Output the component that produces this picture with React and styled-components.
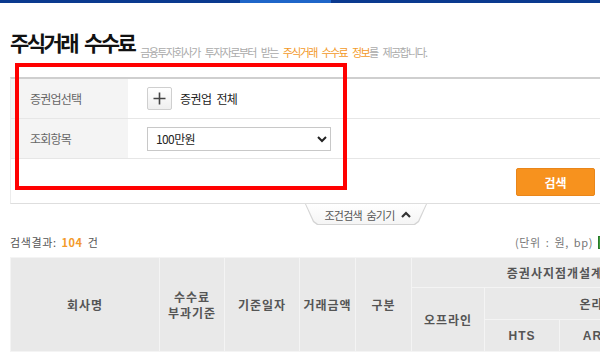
import React from 'react'
import styled, { createGlobalStyle } from 'styled-components'

const GlobalStyle = createGlobalStyle`
  body {
    margin: 0;
    overflow: hidden;
    background: #fff;
    font-family: "Noto Sans CJK KR", "Noto Sans", sans-serif;
    color: #333;
  }
`

const TopBar = styled.div`
  height: 3px;
  width: 100%;
  background: linear-gradient(to right, #0b3a8f 0, #0b3a8f 240px, #1f66c9 240px, #1f66c9 331px, #0b3a8f 331px);
`

const Page = styled.div`
  position: relative;
  width: 1100px;
  padding: 24px 0 0 10px;
`

const TitleRow = styled.div`
  display: flex;
  align-items: flex-end;
  height: 30px;
`

const Title = styled.h2`
  margin: 0;
  font-size: 21px;
  font-weight: 700;
  letter-spacing: -2.6px;
  word-spacing: 5px;
  color: #111;
  line-height: 30px;
`

const Subtitle = styled.p`
  margin: 0 0 -3px 6px;
  font-size: 11px;
  line-height: 16px;
  letter-spacing: -1.6px;
  word-spacing: 4px;
  color: #aaa;
  em {
    font-style: normal;
    color: #f39a2a;
  }
`

const FilterBox = styled.div`
  margin-top: 20px;
  border-top: 2px solid #cfcfcf;
  border-left: 1px solid #ececec;
  border-bottom: 1px solid #dedede;
`

const FilterRow = styled.div`
  display: flex;
  height: 39px;
  border-bottom: 1px solid #e6e6e6;
`

const Label = styled.div`
  width: 117px;
  background: #f4f4f4;
  display: flex;
  align-items: center;
  padding-left: 19px;
  box-sizing: border-box;
  font-size: 12px;
  letter-spacing: -0.8px;
  color: #666;
`

const Field = styled.div`
  display: flex;
  align-items: center;
  padding-left: 19px;
  gap: 8px;
  font-size: 12px;
  letter-spacing: -0.6px;
  word-spacing: 3px;
  color: #222;
`

const PlusButton = styled.button`
  width: 25px;
  height: 23px;
  padding: 0;
  border: 1px solid #cfcfcf;
  border-radius: 2px;
  background: linear-gradient(#ffffff, #efefef);
  display: flex;
  align-items: center;
  justify-content: center;
`

const Select = styled.select`
  width: 184px;
  height: 24px;
  border: 1px solid #c8c8c8;
  background: #fff;
  font-family: inherit;
  font-size: 12px;
  letter-spacing: -0.6px;
  color: #222;
  padding: 0 4px;
`

const ButtonRow = styled.div`
  display: flex;
  gap: 5px;
  padding: 9px 0 7px 505px;
`

const ActionButton = styled.button`
  width: 79px;
  height: 28px;
  border-radius: 2px;
  font-family: inherit;
  font-size: 12px;
  font-weight: 700;
  border: 1px solid ${p => (p.$primary ? '#e9861a' : '#cfcfcf')};
  background: ${p => (p.$primary ? '#f7921e' : '#fff')};
  color: ${p => (p.$primary ? '#fff' : '#555')};
`

const TabWrap = styled.div`
  display: flex;
  padding-left: 295px;
`

const Tab = styled.div`
  position: relative;
  z-index: 0;
  width: 122px;
  height: 21px;
  display: flex;
  align-items: center;
  justify-content: center;
  gap: 7px;
  padding-left: 4px;
  box-sizing: border-box;
  font-size: 11px;
  letter-spacing: -0.8px;
  word-spacing: 3px;
  color: #555;
  &::before,
  &::after {
    content: '';
    position: absolute;
    inset: 0;
    clip-path: polygon(0 0, 100% 0, calc(100% - 8px) calc(100% - 3px), calc(100% - 12px) 100%, 12px 100%, 8px calc(100% - 3px));
    z-index: -1;
  }
  &::before {
    background: #d4d4d4;
  }
  &::after {
    inset: 0 1px 1px 1px;
    background: linear-gradient(#ffffff, #f5f5f5);
  }
`

const ResultRow = styled.div`
  display: flex;
  justify-content: space-between;
  align-items: center;
  height: 18px;
  margin-top: 8px;
  width: 590px;
  font-size: 11px;
  color: #555;
  strong {
    color: #f39a2a;
    font-weight: 700;
    letter-spacing: 0.5px;
  }
`

const Count = styled.span`
  letter-spacing: 0.6px;
  word-spacing: 2px;
`

const Unit = styled.span`
  display: flex;
  align-items: center;
  gap: 5px;
  color: #777;
  letter-spacing: 0.6px;
  word-spacing: 2px;
  margin-right: -10px;
`

const ExcelIcon = styled.span`
  width: 12px;
  height: 13px;
  background: #3c9a3c;
  border: 1px solid #2a7a2a;
  box-sizing: border-box;
`

const Table = styled.table`
  margin-top: 6px;
  border-collapse: collapse;
  table-layout: fixed;
  width: 1000px;
`

const Th = styled.th`
  background: #e9e9e9;
  border: 1px solid #f4f4f4;
  font-size: 12px;
  font-weight: 700;
  color: #555;
  letter-spacing: 1px;
  line-height: 16px;
  height: ${p => p.$h || 29}px;
  padding: 0;
  font-family: ${p => (p.$latin ? '"Liberation Sans", Arial, sans-serif' : 'inherit')};
`

const Td = styled.td`
  height: 30px;
  border: 1px solid #ececec;
`

const RedFrame = styled.div`
  position: absolute;
  left: 15px;
  top: 60px;
  width: 332px;
  height: 127px;
  border: 4px solid #ff0000;
  box-sizing: border-box;
  pointer-events: none;
`

const ChevronUp = () => (
  <svg width="10" height="7" viewBox="0 0 10 7">
    <path d="M1 6 L5 2 L9 6" stroke="#333" strokeWidth="2.2" fill="none" />
  </svg>
)

const Plus = () => (
  <svg width="13" height="13" viewBox="0 0 13 13">
    <path d="M6.5 0.5 V12.5 M0.5 6.5 H12.5" stroke="#444" strokeWidth="1.6" />
  </svg>
)

const widths = [149, 65, 75, 56, 56, 73, 75, 75, 76, 100, 100, 100]

export default function App() {
  return (
    <>
      <GlobalStyle />
      <TopBar />
      <Page>
        <TitleRow>
          <Title>주식거래 수수료</Title>
          <Subtitle>
            금융투자회사가 투자자로부터 받는 <em>주식거래 수수료 정보</em>를 제공합니다.
          </Subtitle>
        </TitleRow>

        <FilterBox>
          <FilterRow>
            <Label>증권업선택</Label>
            <Field>
              <PlusButton aria-label="증권업 추가"><Plus /></PlusButton>
              <span>증권업 전체</span>
            </Field>
          </FilterRow>
          <FilterRow>
            <Label>조회항목</Label>
            <Field>
              <Select defaultValue="100">
                <option value="100">100만원</option>
                <option value="500">500만원</option>
                <option value="1000">1000만원</option>
              </Select>
            </Field>
          </FilterRow>
          <ButtonRow>
            <ActionButton $primary>검색</ActionButton>
            <ActionButton>초기화</ActionButton>
          </ButtonRow>
        </FilterBox>

        <TabWrap>
          <Tab>
            <span>조건검색 숨기기</span>
            <ChevronUp />
          </Tab>
        </TabWrap>

        <ResultRow>
          <Count>검색결과: <strong>104</strong> 건</Count>
          <Unit>(단위 : 원, bp) <ExcelIcon /></Unit>
        </ResultRow>

        <Table>
          <colgroup>
            {widths.map((w, i) => <col key={i} style={{ width: w }} />)}
          </colgroup>
          <thead>
            <tr>
              <Th rowSpan={3}>회사명</Th>
              <Th rowSpan={3}>수수료<br />부과기준</Th>
              <Th rowSpan={3}>기준일자</Th>
              <Th rowSpan={3}>거래금액</Th>
              <Th rowSpan={3}>구분</Th>
              <Th colSpan={4}>증권사지점개설계좌</Th>
              <Th colSpan={3}>비대면개설계좌</Th>
            </tr>
            <tr>
              <Th rowSpan={2} $h={31}>오프라인</Th>
              <Th colSpan={3} $h={31}>온라인</Th>
              <Th rowSpan={2} $h={31}>오프라인</Th>
              <Th colSpan={2} $h={31}>온라인</Th>
            </tr>
            <tr>
              <Th $h={31} $latin>HTS</Th>
              <Th $h={31} $latin>ARS</Th>
              <Th $h={31} $latin>MTS</Th>
              <Th $h={31} $latin>HTS</Th>
              <Th $h={31} $latin>MTS</Th>
            </tr>
          </thead>
          <tbody>
            <tr>
              {widths.map((_, i) => <Td key={i} />)}
            </tr>
          </tbody>
        </Table>
        <RedFrame />
      </Page>
    </>
  )
}
